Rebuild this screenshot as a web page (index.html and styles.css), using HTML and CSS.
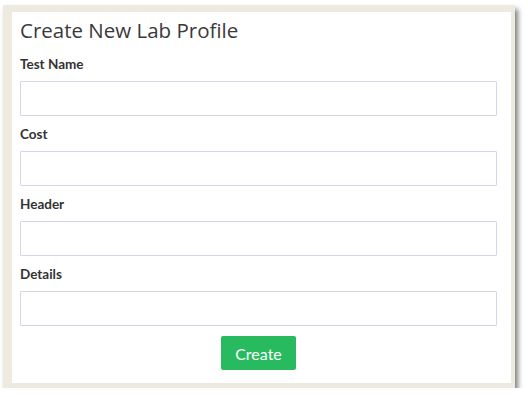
FILE: index.html
```html
<!DOCTYPE html>
<html>
<head>
<meta charset="utf-8">
<link rel="stylesheet" href="styles.css">
</head>
<body>
<div class="frame">
  <form class="panel">
    <h1 class="title">Create New Lab Profile</h1>
    <div class="group">
      <label class="label">Test Name</label>
      <input class="field" type="text">
    </div>
    <div class="group">
      <label class="label">Cost</label>
      <input class="field" type="text">
    </div>
    <div class="group">
      <label class="label">Header</label>
      <input class="field" type="text">
    </div>
    <div class="group">
      <label class="label">Details</label>
      <input class="field" type="text">
    </div>
    <div class="actions">
      <button class="btn" type="button">Create</button>
    </div>
  </form>
</div>
</body>
</html>
```

FILE: styles.css
```css
html, body {
  margin: 0;
  padding: 0;
  background: #ffffff;
}
.frame {
  box-sizing: border-box;
  width: 512px;
  margin: 5px 0 0 3px;
  border-style: solid;
  border-color: #edeae0;
  border-width: 7px 4px 5px 9px;
  background: #ffffff;
  box-shadow: 3px 4px 5px rgba(0, 0, 0, 0.5);
}
.panel {
  display: flex;
  flex-direction: column;
  padding: 4px 14px 13px 8px;
  margin: 0;
}
.title {
  margin: 0 0 12px 0;
  font-family: "Open Sans", sans-serif;
  font-weight: 400;
  font-size: 20.5px;
  line-height: 28px;
  color: #3a3a3a;
}
.group {
  display: flex;
  flex-direction: column;
  margin-bottom: 10px;
}
.group:last-of-type {
  margin-bottom: 9px;
}
.label {
  font-family: Lato, sans-serif;
  font-weight: 700;
  font-size: 13.5px;
  line-height: 16px;
  color: #333333;
  margin-bottom: 9px;
}
.field {
  box-sizing: border-box;
  height: 35px;
  width: 100%;
  border: 1px solid #d3d6ec;
  border-radius: 1px;
  background: #ffffff;
  margin: 0;
  padding: 0 8px;
  outline: none;
}
.actions {
  display: flex;
  justify-content: center;
}
.btn {
  width: 75px;
  height: 34px;
  border: none;
  border-radius: 2px;
  background: #27ba5f;
  color: #ffffff;
  font-family: Lato, sans-serif;
  font-size: 16px;
  font-weight: 400;
  padding: 0;
}
```
